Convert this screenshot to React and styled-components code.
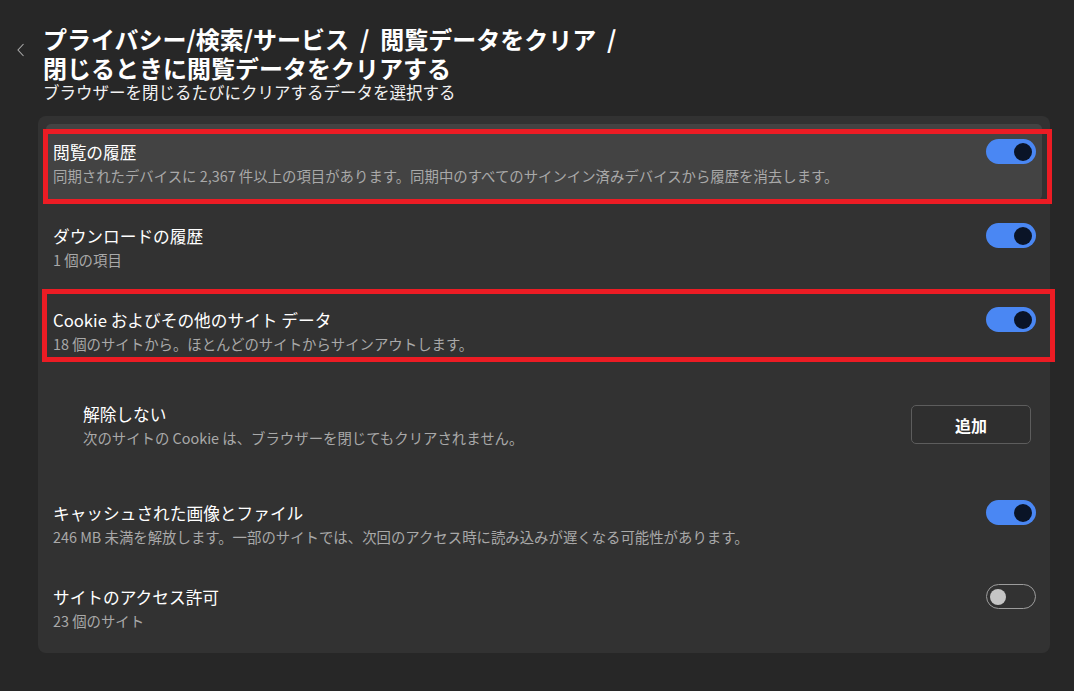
import React from 'react';
import styled, { createGlobalStyle } from 'styled-components';

const GlobalStyle = createGlobalStyle`
  html, body {
    margin: 0;
    padding: 0;
    background: #272727;
  }
  body {
    font-family: "Noto Sans CJK JP", "Noto Sans", sans-serif;
    color: #ffffff;
  }
`;

const Page = styled.div`
  width: 1074px;
  height: 691px;
  box-sizing: border-box;
  padding: 24px 24px 0 38px;
  background: #272727;
`;

const Header = styled.header`
  position: relative;
  padding-left: 5px;
`;

const BackButton = styled.button`
  position: absolute;
  left: -23px;
  top: 18px;
  width: 12px;
  height: 16px;
  padding: 0;
  border: 0;
  background: none;
  display: flex;
  align-items: center;
  justify-content: center;
`;

const Title = styled.h1`
  margin: 0;
  font-size: 24px;
  line-height: 29px;
  font-weight: 700;
  letter-spacing: 0;
`;

const Subtitle = styled.p`
  margin: 0;
  font-size: 16.5px;
  line-height: 20px;
  color: #f2f2f2;
`;

const Card = styled.section`
  margin-top: 14px;
  width: 1012px;
  box-sizing: border-box;
  padding: 8px;
  background: #323232;
  border-radius: 8px;
  display: flex;
  flex-direction: column;
  gap: 8px;
`;

const Row = styled.div`
  position: relative;
  display: flex;
  align-items: flex-start;
  justify-content: space-between;
  height: 76px;
  box-sizing: border-box;
  padding: 17px 6px 0 7px;
  border-radius: 5px;
  background: ${p => (p.$active ? '#434343' : 'transparent')};
`;

const SubRow = styled.div`
  display: flex;
  align-items: center;
  justify-content: space-between;
  height: 101px;
  box-sizing: border-box;
  padding: 0 11px 4px 37px;
`;

const Texts = styled.div`
  display: flex;
  flex-direction: column;
  gap: 3px;
`;

const RowTitle = styled.div`
  font-size: 16.7px;
  line-height: 22px;
  color: #ffffff;
`;

const RowDesc = styled.div`
  font-size: 14.4px;
  line-height: 19px;
  color: #a9a9a9;
`;

const Highlight = styled.div`
  position: absolute;
  top: ${p => p.$top}px;
  left: ${p => p.$left}px;
  right: ${p => p.$right}px;
  bottom: ${p => p.$bottom}px;
  border: 5px solid #ec1c24;
  pointer-events: none;
`;

const Track = styled.div`
  position: relative;
  flex: none;
  width: 50px;
  height: 25px;
  margin-top: -2px;
  box-sizing: border-box;
  border-radius: 13px;
  background: ${p => (p.$on ? '#4a87f3' : 'transparent')};
  border: ${p => (p.$on ? 'none' : '1px solid #9c9c9c')};
`;

const Knob = styled.span`
  position: absolute;
  top: 50%;
  transform: translateY(-50%);
  width: ${p => (p.$on ? 18 : 16)}px;
  height: ${p => (p.$on ? 18 : 16)}px;
  border-radius: 50%;
  background: ${p => (p.$on ? '#0a1427' : '#c6c6c6')};
  ${p => (p.$on ? 'right: 4px;' : 'left: 3px;')}
`;

const AddButton = styled.button`
  width: 120px;
  height: 39px;
  border: 1px solid #5d5d5d;
  border-radius: 5px;
  background: #2f2f2f;
  color: #ffffff;
  font-family: inherit;
  font-size: 16px;
  font-weight: 700;
`;

const Toggle = ({ on }) => (
  <Track $on={on}>
    <Knob $on={on} />
  </Track>
);

const Setting = ({ title, desc, on, active, mark }) => (
  <Row $active={active}>
    <Texts>
      <RowTitle>{title}</RowTitle>
      <RowDesc>{desc}</RowDesc>
    </Texts>
    <Toggle on={on} />
    {mark && <Highlight $top={mark[0]} $right={mark[1]} $bottom={mark[2]} $left={mark[3]} />}
  </Row>
);

const App = () => (
  <Page>
    <GlobalStyle />
    <Header>
      <BackButton aria-label="戻る">
        <svg width="8" height="14" viewBox="0 0 8 14">
          <polyline points="6.5,1 1,7 6.5,13" fill="none" stroke="#a8a8a8" strokeWidth="1.1" />
        </svg>
      </BackButton>
      <Title>
        プライバシー/検索/サービス&nbsp;&nbsp;/&nbsp;&nbsp;閲覧データをクリア&nbsp;&nbsp;/
        <br />
        閉じるときに閲覧データをクリアする
      </Title>
      <Subtitle>ブラウザーを閉じるたびにクリアするデータを選択する</Subtitle>
    </Header>
    <Card>
      <Setting
        active
        on
        mark={[5, -10, -4, -3]}
        title="閲覧の履歴"
        desc="同期されたデバイスに 2,367 件以上の項目があります。同期中のすべてのサインイン済みデバイスから履歴を消去します。"
      />
      <Setting on title="ダウンロードの履歴" desc="1 個の項目" />
      <Setting
        on
        mark={[-3, -13, 6, -4]}
        title="Cookie およびその他のサイト データ"
        desc="18 個のサイトから。ほとんどのサイトからサインアウトします。"
      />
      <SubRow>
        <Texts>
          <RowTitle>解除しない</RowTitle>
          <RowDesc>次のサイトの Cookie は、ブラウザーを閉じてもクリアされません。</RowDesc>
        </Texts>
        <AddButton>追加</AddButton>
      </SubRow>
      <Setting
        on
        title="キャッシュされた画像とファイル"
        desc="246 MB 未満を解放します。一部のサイトでは、次回のアクセス時に読み込みが遅くなる可能性があります。"
      />
      <Setting on={false} title="サイトのアクセス許可" desc="23 個のサイト" />
    </Card>
  </Page>
);

export default App;
